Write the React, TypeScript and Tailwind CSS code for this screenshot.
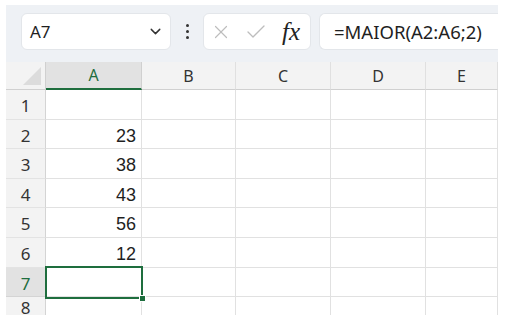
import { ChevronDown, X, Check } from 'lucide-react';

const cols = ['A', 'B', 'C', 'D', 'E'];
const rowHeights = [30, 29, 30, 29, 30, 30, 29, 20];
const values: Record<number, string> = { 2: '23', 3: '38', 4: '43', 5: '56', 6: '12' };

export default function App() {
  return (
    <div className="w-[515px] h-[322px] bg-white pt-[5px] pl-[6px] font-['Noto_Sans',sans-serif]">
      <div className="w-[492px] h-[310px] overflow-hidden flex flex-col">
        {/* barra de fórmulas */}
        <div className="h-[57px] shrink-0 bg-[#eef1f5] flex items-start pt-[8px] pl-[15px]">
          <div className="w-[150px] h-[37px] rounded-md bg-white border border-[#e3e6ea] flex items-center pl-[8px] pr-[6px]">
            <span className="text-[17px] text-[#1f1f1f] flex-1">A7</span>
            <ChevronDown className="w-[17px] h-[17px] text-[#333]" strokeWidth={2} />
          </div>
          <div className="w-[32px] h-[37px] flex flex-col items-center justify-center gap-[3px]">
            <span className="w-[3px] h-[3px] rounded-full bg-[#333]" />
            <span className="w-[3px] h-[3px] rounded-full bg-[#333]" />
            <span className="w-[3px] h-[3px] rounded-full bg-[#333]" />
          </div>
          <div className="w-[108px] h-[37px] rounded-md bg-white border border-[#e3e6ea] flex items-center pl-[6px]">
            <X className="w-[22px] h-[22px] text-[#bdbdbd]" strokeWidth={1.3} />
            <Check className="w-[24px] h-[24px] text-[#bdbdbd] ml-[12px]" strokeWidth={1.3} />
            <span className="ml-[14px] text-[25px] italic text-[#222] font-['Liberation_Serif',serif] leading-none">fx</span>
          </div>
          <div className="ml-[8px] flex-1 h-[37px] rounded-l-md bg-white border border-r-0 border-[#e3e6ea] flex items-center pl-[14px]">
            <span className="text-[18.5px] text-[#1f1f1f]">=MAIOR(A2:A6;2)</span>
          </div>
        </div>

        {/* planilha */}
        <div className="relative flex-1">
          <div className="grid grid-cols-[40px_96px_94px_95px_95px_1fr]">
            <div className="h-[28px] bg-[#f3f3f3] border-r border-b border-[#d0d0d0] relative">
              <div className="absolute right-[4px] bottom-[4px] w-0 h-0 border-l-[18px] border-l-transparent border-b-[18px] border-b-[#dcdcdc]" />
            </div>
            {cols.map((c) => (
              <div
                key={c}
                className={
                  c === 'A'
                    ? 'h-[28px] bg-[#e2e2e2] border-r border-[#d0d0d0] border-b-2 border-b-[#1e6e3e] flex items-center justify-center text-[16px] text-[#1e6e3e]'
                    : 'h-[28px] bg-[#f3f3f3] border-r border-b border-[#d0d0d0] border-r-[#e0e0e0] flex items-center justify-center text-[16px] text-[#333]'
                }
              >
                {c}
              </div>
            ))}
            {rowHeights.map((h, i) => {
              const r = i + 1;
              return [
                <div
                  key={`h${r}`}
                  style={{ height: h }}
                  className={
                    r === 7
                      ? 'bg-[#e2e2e2] border-r border-b border-[#d4d4d4] flex items-center justify-center pt-[3px] text-[17px] text-[#1e6e3e]'
                      : 'bg-[#f3f3f3] border-r border-b border-[#d4d4d4] border-b-[#e3e3e3] flex items-center justify-center pt-[3px] text-[17px] text-[#333]'
                  }
                >
                  {r}
                </div>,
                ...cols.map((c) => (
                  <div
                    key={`${c}${r}`}
                    style={{ height: h }}
                    className="border-r border-b border-[#e1e1e1] flex items-center justify-end pr-[5px] pt-[4px] text-[18px] text-[#1f1f1f] font-['Liberation_Sans',sans-serif]"
                  >
                    {c === 'A' ? values[r] ?? '' : ''}
                  </div>
                )),
              ];
            })}
          </div>
          {/* seleção A7 */}
          <div className="absolute left-[39px] top-[204px] w-[98px] h-[33px] border-2 border-[#1e6e3e]">
            <div className="absolute right-[-5px] bottom-[-5px] w-[7px] h-[7px] bg-[#1e6e3e] border border-white" />
          </div>
        </div>
      </div>
    </div>
  );
}
